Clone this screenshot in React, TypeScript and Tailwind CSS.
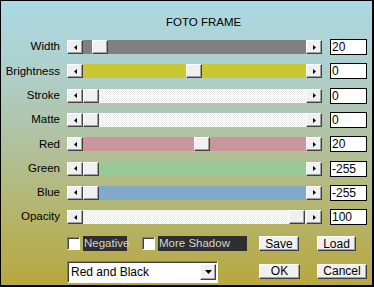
import React from "react";

type Row = { label: string; value: string; pos: number; track: string };

const rows: Row[] = [
  { label: "Width", value: "20", pos: 9, track: "bg-[#808080]" },
  { label: "Brightness", value: "0", pos: 103, track: "bg-[#c9c832]" },
  { label: "Stroke", value: "0", pos: 0, track: "dither" },
  { label: "Matte", value: "0", pos: 0, track: "dither" },
  { label: "Red", value: "20", pos: 111, track: "bg-[#c99799]" },
  { label: "Green", value: "-255", pos: 0, track: "bg-[#96c996]" },
  { label: "Blue", value: "-255", pos: 0, track: "bg-[#81a9c9]" },
  { label: "Opacity", value: "100", pos: 206, track: "dither" },
];

const raised =
  "bg-[#f0f0f0] border border-t-white border-l-white border-r-[#404040] border-b-[#404040] shadow-[inset_-1px_-1px_0_#a0a0a0]";

function Arrow({ dir }: { dir: "left" | "right" | "down" }) {
  if (dir === "down")
    return (
      <svg width="7" height="4" viewBox="0 0 7 4">
        <path d="M0 0H7L3.5 4Z" fill="#000" />
      </svg>
    );
  return (
    <svg width="3" height="5" viewBox="0 0 3 5">
      {dir === "left" ? <path d="M3 0V5L0 2.5Z" fill="#000" /> : <path d="M0 0V5L3 2.5Z" fill="#000" />}
    </svg>
  );
}

function Slider({ pos, track }: { pos: number; track: string }) {
  const trackCls =
    track === "dither"
      ? "bg-[repeating-conic-gradient(#ffffff_0_25%,#ebebeb_0_50%)] bg-[length:2px_2px]"
      : track;
  return (
    <div className="flex h-[14px] w-[255px]">
      <div className={`${raised} flex h-[14px] w-[16px] shrink-0 items-center justify-center`}>
        <Arrow dir="left" />
      </div>
      <div className={`relative h-[14px] flex-1 ${trackCls}`}>
        <div className={`${raised} absolute top-0 h-[14px] w-[16px]`} style={{ left: pos }} />
      </div>
      <div className={`${raised} flex h-[14px] w-[16px] shrink-0 items-center justify-center`}>
        <Arrow dir="right" />
      </div>
    </div>
  );
}

function Check({ label, w }: { label: string; w: string }) {
  return (
    <div className="flex shrink-0 items-center">
      <div className="h-[13px] w-[13px] border border-t-[#808080] border-l-[#808080] border-r-white border-b-white bg-white shadow-[inset_1px_1px_0_#404040]" />
      <div className={`ml-[3px] flex h-[15px] items-center bg-[#2e2e2e] pl-[1px] text-[#d4d4d4] ${w}`}>{label}</div>
    </div>
  );
}

function Btn({ label, w }: { label: string; w: string }) {
  return (
    <div className={`${raised} flex h-[15px] items-center justify-center text-black ${w}`}>{label}</div>
  );
}

export default function App() {
  return (
    <div
      className="h-[287px] w-[374px] overflow-hidden border-t border-l border-r-2 border-b-2 border-black bg-[linear-gradient(to_bottom,#acd9e3_0%,#aecfcc_25%,#b0c4a8_45%,#b4b672_72%,#b8a73f_100%)] text-[11.5px] leading-none text-black"
      style={{ fontFamily: '"Liberation Sans", Arial, sans-serif' }}
    >
      <div className="flex h-[34px] items-center pl-[165px] pt-[10px]">FOTO FRAME</div>
      <div className="flex flex-col">
        {rows.map((r) => (
          <div key={r.label} className="flex h-[24.3px] items-center">
            <div className="w-[59px] text-right">{r.label}</div>
            <div className="ml-[7px]">
              <Slider pos={r.pos} track={r.track} />
            </div>
            <div className="ml-[8px] flex h-[16px] w-[37px] items-center border border-black bg-white pl-[1px] text-[12px]">
              {r.value}
            </div>
          </div>
        ))}
      </div>
      <div className="mt-[6px] flex pl-[66px]">
        <div className="flex w-[151px] shrink-0 flex-col">
          <div className="flex h-[16px] items-center gap-[15px]">
            <Check label="Negative" w="w-[44px]" />
            <Check label="More Shadow" w="w-[89px]" />
          </div>
          <div className="mt-[10px] flex h-[22px] w-[151px] items-center justify-between border border-t-[#808080] border-l-[#808080] border-r-white border-b-white bg-white pl-[3px] pr-[1px] text-[12px] shadow-[inset_1px_1px_0_#404040]">
            <span>Red and Black</span>
            <div className={`${raised} flex h-[16px] w-[16px] items-center justify-center`}>
              <Arrow dir="down" />
            </div>
          </div>
        </div>
        <div className="ml-[41px] mt-[1px] grid grid-cols-[auto_auto] gap-x-[17px] gap-y-[8px] text-[12px]">
          <Btn label="Save" w="w-[40px]" />
          <Btn label="Load" w="w-[39px]" />
          <Btn label="OK" w="w-[41px]" />
          <Btn label="Cancel" w="w-[50px]" />
        </div>
      </div>
    </div>
  );
}
